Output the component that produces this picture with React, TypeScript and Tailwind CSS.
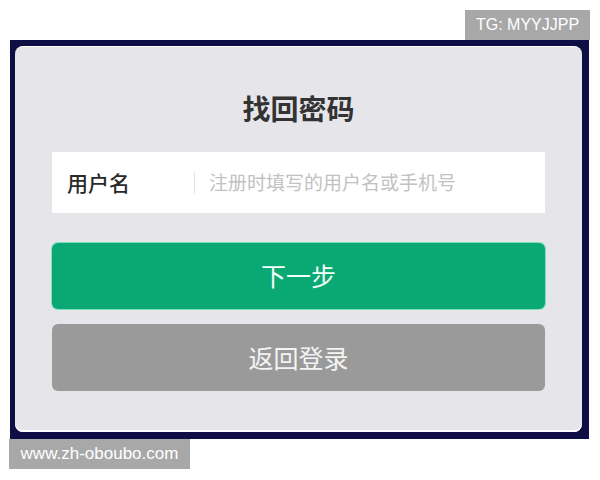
export default function App() {
  return (
    <div className="flex h-[480px] w-[600px] flex-col bg-white pt-[10px] font-['Liberation_Sans','Noto_Sans_CJK_SC',sans-serif]">
      <div className="flex justify-end pr-[10px]">
        <div className="flex h-[30px] w-[125px] items-center justify-center bg-[#a8a8a8] text-[16px] text-white">
          TG: MYYJJPP
        </div>
      </div>

      <div className="ml-[10px] flex h-[399px] w-[579px] bg-[#0e0e44] pb-[7px] pl-[5px] pr-[7px] pt-[6px]">
        <div className="flex flex-1 flex-col rounded-[8px] border-t border-white bg-[#e6e6ea] px-[37px] pt-[43px] shadow-[inset_0_-2px_0_#ffffff]">
          <h1 className="text-center text-[28px] font-bold leading-[36px] text-[#333333] font-['Noto_Sans_CJK_SC',sans-serif]">
            找回密码
          </h1>

          <div className="mt-[26px] flex h-[61px] items-center bg-white pl-[15px] font-['Noto_Sans_CJK_SC',sans-serif]">
            <span className="w-[127px] text-[21px] font-medium text-[#2a2a2a]">用户名</span>
            <span className="mr-[14px] h-[22px] w-px bg-[#e4e4e4]" />
            <span className="text-[19px] text-[#c2c2c2]">注册时填写的用户名或手机号</span>
          </div>

          <button className="mt-[30px] flex h-[66px] items-center justify-center rounded-[6px] bg-[#0aa872] text-[25px] text-[#f2fffa] shadow-[0_0_0_1px_#7fe0c0] font-['Noto_Sans_CJK_SC',sans-serif]">
            下一步
          </button>

          <button className="mt-[15px] flex h-[67px] items-center justify-center rounded-[6px] bg-[#9a9a9a] text-[25px] text-[#f4f4f4] font-['Noto_Sans_CJK_SC',sans-serif]">
            返回登录
          </button>
        </div>
      </div>

      <div className="ml-[9px] flex h-[30px] w-[181px] items-center justify-center bg-[#a8a8a8] text-[17px] text-white">
        www.zh-oboubo.com
      </div>
    </div>
  );
}
